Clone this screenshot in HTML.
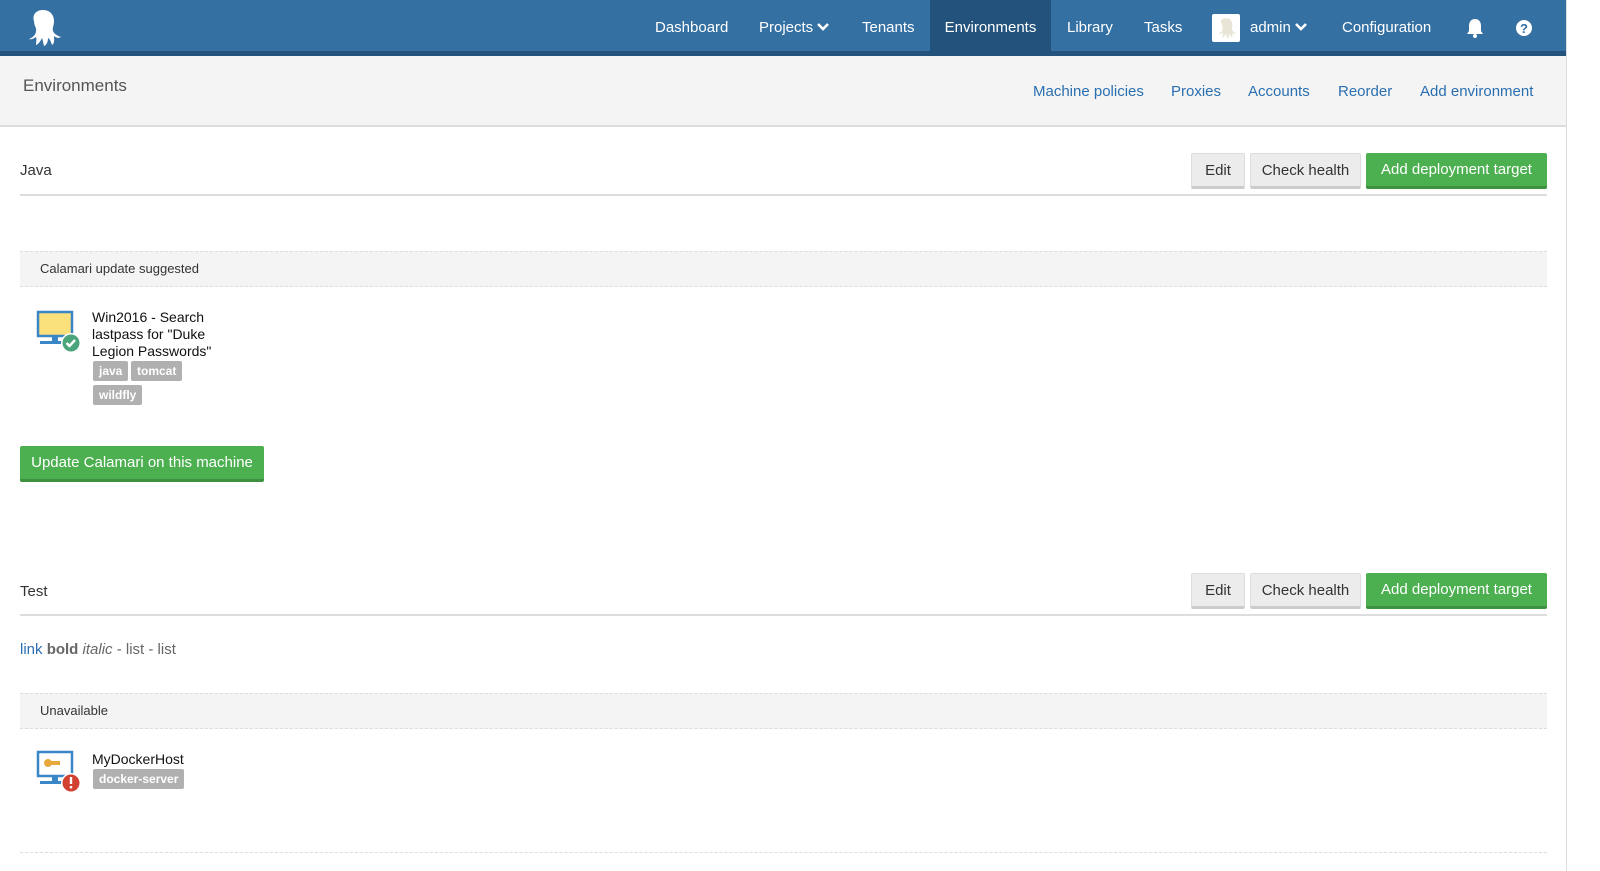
<!DOCTYPE html>
<html><head><meta charset="utf-8"><style>
*{box-sizing:border-box;margin:0;padding:0}
body{width:1600px;height:871px;background:#fff;font-family:"Liberation Sans",sans-serif;color:#333;overflow:hidden;position:relative}
.wrap{position:absolute;left:0;top:0;width:1567px;height:871px;border-right:1px solid #ddd}
.nav{height:56px;background:#3470a2;border-bottom:5px solid #23527c;position:relative}
.nav a{position:absolute;top:0;height:51px;line-height:55px;color:#fff;font-size:15px;text-decoration:none}
.nav .act{background:#23527c;}
.chev{display:inline-block;vertical-align:middle;margin-left:3px;margin-top:-2px}
.sub{height:71px;background:#f4f4f4;border-bottom:2px solid #ddd;position:relative}
.t{position:absolute}
.link{color:#2a6fb0;font-size:15px}
.btn{position:absolute;height:36px;line-height:34px;font-size:15px;text-align:center;border-radius:2px}
.g{background:#4caf50;color:#fff;border-bottom:3px solid #3d9140}
.w{background:#ececec;color:#333;border:1px solid #ddd;border-bottom:3px solid #ccc}
.hr{position:absolute;left:20px;width:1527px;height:2px;background:#ddd}
.band{position:absolute;left:20px;width:1527px;height:36px;background:#f4f4f4;border-top:1px dashed #ddd;border-bottom:1px dashed #ddd;font-size:13px;line-height:34px;padding-left:20px}
.tag{position:absolute;background:#b0b0b0;color:#fff;font-weight:bold;font-size:12px;height:20px;line-height:20px;padding:0 6px;border-radius:2px}
</style></head><body><div class="wrap">
<div class="nav">
<svg style="position:absolute;left:24px;top:8px" width="38" height="40" viewBox="0 0 38 40"><path d="M19 2c7 0 11 5 11 11 0 5-2 7-1 10 1 3 5 5 8 6-3 2-6 0-7-1 0 3 1 7-2 9-1-3-2-6-4-7 0 3-1 7-4 8-1-3-1-6-2-8-1 2-3 6-6 7 0-3 1-6 0-8-2 1-4 3-7 2 3-1 7-4 7-8 1-3-2-5-2-10C8 7 12 2 19 2z" fill="#fff"/></svg>
<a style="left:655px">Dashboard</a>
<a style="left:759px">Projects<svg class="chev" width="14" height="10" viewBox="0 0 14 10"><path d="M2 2l5 5 5-5" stroke="#fff" stroke-width="2.6" fill="none"/></svg></a>
<a style="left:862px">Tenants</a>
<a class="act" style="left:930px;width:121px;text-align:center">Environments</a>
<a style="left:1067px">Library</a>
<a style="left:1144px">Tasks</a>
<span style="position:absolute;left:1212px;top:14px;width:28px;height:28px;background:#fff;border-radius:2px"><svg width="28" height="28" viewBox="0 0 38 40"><path d="M19 6c6 0 9 4 9 9 0 4-1 6 0 8 1 3 4 4 6 5-2 1-5 0-6-1 0 3 1 6-1 7-1-2-2-5-3-6 0 3-1 6-3 7-1-3-1-5-2-7-1 2-3 5-5 6 0-3 1-5 0-7-2 1-4 2-6 1 3-1 6-3 6-6 1-3-1-4-1-8C10 9 13 6 19 6z" fill="#e8e5d6"/></svg></span>
<a style="left:1250px">admin<svg class="chev" width="14" height="10" viewBox="0 0 14 10"><path d="M2 2l5 5 5-5" stroke="#fff" stroke-width="2.6" fill="none"/></svg></a>
<a style="left:1342px">Configuration</a>
<svg style="position:absolute;left:1466px;top:18px" width="18" height="20" viewBox="0 0 18 20"><path d="M9 1c4 0 6 3 6 7v5l2 3H1l2-3V8c0-4 2-7 6-7z" fill="#fff"/><circle cx="9" cy="18" r="2" fill="#fff"/></svg>
<svg style="position:absolute;left:1515px;top:19px" width="18" height="18" viewBox="0 0 18 18"><circle cx="9" cy="9" r="8" fill="#fff"/><text x="9" y="14" font-size="13" font-weight="bold" text-anchor="middle" fill="#3470a2" font-family="Liberation Sans">?</text></svg>
</div>
<div class="sub">
<div class="t" style="left:23px;top:20px;font-size:17px;color:#555">Environments</div>
<div class="t link" style="left:1033px;top:27px">Machine policies</div>
<div class="t link" style="left:1171px;top:27px">Proxies</div>
<div class="t link" style="left:1248px;top:27px">Accounts</div>
<div class="t link" style="left:1338px;top:27px">Reorder</div>
<div class="t link" style="left:1420px;top:27px">Add environment</div>
</div>

<div class="t" style="left:20px;top:162px;font-size:15px">Java</div>
<div class="btn w" style="left:1191px;top:153px;width:54px">Edit</div>
<div class="btn w" style="left:1250px;top:153px;width:111px">Check health</div>
<div class="btn g" style="left:1366px;top:153px;width:181px">Add deployment target</div>
<div class="hr" style="top:194px"></div>
<div class="band" style="top:251px">Calamari update suggested</div>
<svg class="t" style="left:36px;top:310px" width="46" height="44" viewBox="0 0 46 44"><rect x="2" y="2" width="34" height="24" fill="#fbe17b" stroke="#3a87c8" stroke-width="2.5"/><rect x="16" y="27" width="6" height="4" fill="#3a87c8"/><rect x="4" y="31" width="22" height="3" fill="#3a87c8"/><circle cx="35" cy="33" r="10" fill="#fff"/><circle cx="35" cy="33" r="8.5" fill="#4aa57a"/><path d="M30.5 33l3 3 5.5-6" stroke="#fff" stroke-width="2.5" fill="none"/></svg>
<div class="t" style="left:92px;top:309px;font-size:14px;line-height:17px;color:#111">Win2016 - Search<br>lastpass for "Duke<br>Legion Passwords"</div>
<div class="tag" style="left:93px;top:361px">java</div>
<div class="tag" style="left:131px;top:361px">tomcat</div>
<div class="tag" style="left:93px;top:385px">wildfly</div>
<div class="btn g" style="left:20px;top:446px;width:244px">Update Calamari on this machine</div>

<div class="t" style="left:20px;top:583px;font-size:15px">Test</div>
<div class="btn w" style="left:1191px;top:573px;width:54px">Edit</div>
<div class="btn w" style="left:1250px;top:573px;width:111px">Check health</div>
<div class="btn g" style="left:1366px;top:573px;width:181px">Add deployment target</div>
<div class="hr" style="top:614px"></div>
<div class="t" style="left:20px;top:641px;font-size:15px;color:#666"><span style="color:#2a6fb0">link</span> <b>bold</b> <i>italic</i> - list - list</div>
<div class="band" style="top:693px">Unavailable</div>
<svg class="t" style="left:36px;top:750px" width="46" height="44" viewBox="0 0 46 44"><rect x="2" y="2" width="34" height="24" fill="#fff" stroke="#3a87c8" stroke-width="2.5"/><circle cx="12" cy="13" r="4" fill="#e8a93c"/><rect x="12" y="11" width="12" height="4" fill="#e8a93c"/><rect x="16" y="27" width="6" height="4" fill="#3a87c8"/><rect x="4" y="31" width="22" height="3" fill="#3a87c8"/><circle cx="35" cy="33" r="10" fill="#fff"/><circle cx="35" cy="33" r="8.5" fill="#d2402f"/><rect x="33.8" y="27" width="2.4" height="7" fill="#fff"/><rect x="33.8" y="36" width="2.4" height="2.4" fill="#fff"/></svg>
<div class="t" style="left:92px;top:751px;font-size:14px;color:#111">MyDockerHost</div>
<div class="tag" style="left:93px;top:769px">docker-server</div>
<div class="t" style="left:20px;top:852px;width:1527px;border-top:1px dashed #ddd"></div>
</div></body></html>
